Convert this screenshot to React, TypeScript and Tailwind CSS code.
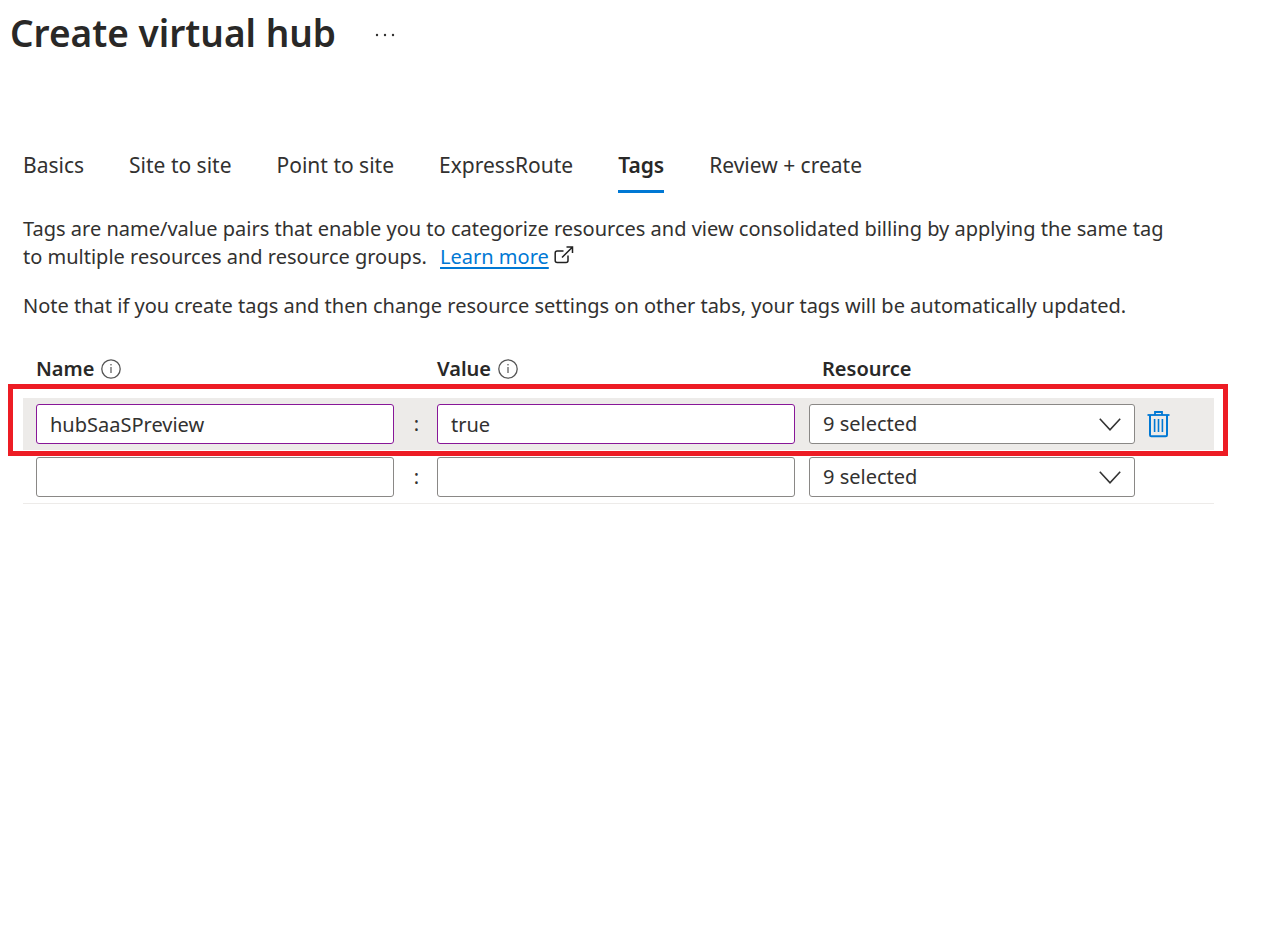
import { useState } from "react";

type TagRow = { id: number; name: string; value: string };

const TABS = ["Basics", "Site to site", "Point to site", "ExpressRoute", "Tags", "Review + create"];

const ROW_GRID = "grid grid-cols-[371fr_43fr_372fr_326fr_79fr]";

function InfoIcon() {
  return (
    <svg width="20" height="20" viewBox="0 0 20 20" fill="none" aria-hidden="true">
      <circle cx="10" cy="10" r="9.2" stroke="#555" strokeWidth="1.3" />
      <path d="M10 8V14" stroke="#555" strokeWidth="1.2" />
      <circle cx="10" cy="5.8" r="0.8" fill="#555" />
    </svg>
  );
}

function ExternalIcon() {
  return (
    <svg className="inline-block align-baseline" width="20" height="18" viewBox="0 0 20 18" fill="none" stroke="#222" strokeWidth="1.5" aria-hidden="true">
      <path d="M9.5 5H3.2Q1.2 5 1.2 7V14.600Q1.200 16.600 3.200 16.600H12Q14 16.600 14 14.600V9.500" />
      <path d="M8 11.500L18.300 1.200M12.500 1H18.500V7" />
    </svg>
  );
}

function ChevronIcon() {
  return (
    <svg width="22" height="14" viewBox="0 0 22 14" fill="none" stroke="#333" strokeWidth="1.6" aria-hidden="true">
      <path d="M0.800 1.800L11 12.800L21.200 1.800" />
    </svg>
  );
}

function TrashIcon() {
  return (
    <svg width="23" height="28" viewBox="0 0 23 28" fill="none" stroke="#0078d4" aria-hidden="true">
      <path d="M0.500 5H22.500" strokeWidth="1.800" />
      <path d="M8 5V2H15V5" strokeWidth="1.800" />
      <path d="M3 5V25Q3 26.200 4.200 26.200H18.800Q20 26.200 20 25V5" strokeWidth="2" />
      <path d="M7.600 9V22M11.500 9V22M15.400 9V22" strokeWidth="1.600" />
    </svg>
  );
}

function TagTableRow({ row }: { row: TagRow }) {
  const filled = row.name !== "";
  const field =
    "block h-10 w-full min-w-0 rounded-[3px] border bg-white px-[13px] text-[#323130] outline-none " +
    (filled ? "border-[#881798]" : "border-[#8a8886]");
  return (
    <tr className={`${ROW_GRID} border-b ${filled ? "border-white bg-[#edebe9]" : "border-[#edebe9]"}`}>
      <td className="py-[6px] pl-[13px]">
        <input aria-label={`Name of tag ${row.id}`} defaultValue={row.name} className={field} />
      </td>
      <td className="self-center pl-[2px] text-center">:</td>
      <td className="py-[6px] pr-[14px]">
        <input aria-label={`Value of tag ${row.id}`} defaultValue={row.value} className={field} />
      </td>
      <td className="relative py-[6px]">
        <select
          aria-label={`Resource of tag ${row.id}`}
          className="block h-10 w-full min-w-0 appearance-none rounded-[3px] border border-[#8a8886] bg-white px-[13px] text-[#323130] outline-none"
        >
          <option>9 selected</option>
        </select>
        <span className="pointer-events-none absolute inset-y-0 right-[14px] flex items-center">
          <ChevronIcon />
        </span>
      </td>
      <td className="flex items-center pl-3">
        {filled && (
          <button type="button" aria-label="Delete tag">
            <TrashIcon />
          </button>
        )}
      </td>
    </tr>
  );
}

export default function App() {
  const [active, setActive] = useState("Tags");
  const rows: TagRow[] = [
    { id: 1, name: "hubSaaSPreview", value: "true" },
    { id: 2, name: "", value: "" },
  ];

  return (
    <main className="min-h-screen bg-white font-['Noto_Sans',sans-serif] text-[20px] leading-7 text-[#323130]">
      <header className="flex items-center gap-[39px] pt-2 pl-[10px]">
        <h1 className="pb-1 text-[37px] leading-[50px] font-semibold text-[#292827]">Create virtual hub</h1>
        <button type="button" aria-label="More actions">
          <svg width="22" height="4" viewBox="0 0 22 4" fill="#323130" aria-hidden="true">
            <circle cx="2" cy="2" r="1.200" />
            <circle cx="10" cy="2" r="1.200" />
            <circle cx="18" cy="2" r="1.200" />
          </svg>
        </button>
      </header>

      <div className="pt-[89px] pr-[69px] pl-[23px]">
        <nav className="flex gap-[45px] text-[21px]">
          {TABS.map((tab) => (
            <button
              key={tab}
              type="button"
              onClick={() => setActive(tab)}
              className={`border-b-[3px] pb-[11px] whitespace-nowrap ${
                tab === active ? "border-[#0078d4] font-semibold text-[#292827]" : "border-transparent"
              }`}
            >
              {tab}
            </button>
          ))}
        </nav>

        <p className="mt-[22px] pr-9">
          Tags are name/value pairs that enable you to categorize resources and view consolidated billing by applying the
          same tag to multiple resources and resource groups.{" "}
          <a href="#learn-more" className="ml-2 text-[#0078d4] underline decoration-2 underline-offset-3">
            Learn more
          </a>{" "}
          <ExternalIcon />
        </p>
        <p className="mt-[21px]">
          Note that if you create tags and then change resource settings on other tabs, your tags will be automatically
          updated.
        </p>

        <div className="relative mt-[35px]">
          <table className="block w-full">
            <thead className="block">
              <tr className={`${ROW_GRID} h-[43px] text-left text-[#292827]`}>
                <th className="flex items-start gap-[7px] pl-[13px] font-semibold">
                  Name
                  <button type="button" aria-label="About names" className="mt-1">
                    <InfoIcon />
                  </button>
                </th>
                <td />
                <th className="flex items-start gap-[7px] font-semibold">
                  Value
                  <button type="button" aria-label="About values" className="mt-1">
                    <InfoIcon />
                  </button>
                </th>
                <th className="pl-[13px] font-semibold">Resource</th>
                <td />
              </tr>
            </thead>
            <tbody className="block">
              {rows.map((row) => (
                <TagTableRow key={row.id} row={row} />
              ))}
            </tbody>
          </table>
          <div className="pointer-events-none absolute top-[29px] -right-[14px] -left-[15px] h-[72px] border-[5px] border-[#ed1c24]" />
        </div>
      </div>
    </main>
  );
}
